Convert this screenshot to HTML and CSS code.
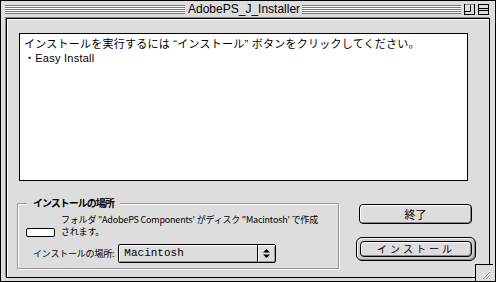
FILE: index.html
```html
<!DOCTYPE html>
<html>
<head lang="ja">
    <meta charset="UTF-8">
    <title>AdobePS_J_Installer</title>
    <link rel="stylesheet" href="styles.css">
</head>
<body>
    <div class="window">
        <div class="titlebar">
            <div class="stripes left"></div>
            <div class="title">AdobePS_J_Installer</div>
            <div class="stripes right"></div>
            <div class="tbtn">
                <svg width="11" height="11" viewBox="0 0 11 11">
                    <rect x="0.5" y="0.5" width="10" height="10" fill="#ddd" stroke="#000"/>
                    <path d="M1 1h9" stroke="#fff"/>
                    <path d="M6.5 1v6.5H1" fill="none" stroke="#000"/>
                </svg>
            </div>
            <div class="tbtn">
                <svg width="11" height="11" viewBox="0 0 11 11">
                    <rect x="0.5" y="0.5" width="10" height="10" fill="#ddd" stroke="#000"/>
                    <path d="M1 4.5h9M1 6.5h9" stroke="#000"/>
                </svg>
            </div>
        </div>
        <div class="frame">
            <div class="content">
                <div class="readme">
                    <p>インストールを実行するには “インストール” ボタンをクリックしてください。</p>
                    <p>・Easy Install</p>
                </div>
                <div class="bottom">
                    <div class="group">
                        <span class="group-title">インストールの場所</span>
                        <div class="folder-row">
                            <span class="folder-box"></span>
                            <p class="folder-text">フォルダ "AdobePS Components' がディスク "Macintosh' で作成<br>されます。</p>
                        </div>
                        <div class="loc-row">
                            <span class="loc-label">インストールの場所:</span>
                            <div class="popup">
                                <span class="popup-value">Macintosh</span>
                                <span class="popup-arrows">
                                    <svg width="7" height="11" viewBox="0 0 7 11">
                                        <path d="M3.5 1L7 4.5H0Z M0 6.5H7L3.5 10Z" fill="#000"/>
                                    </svg>
                                </span>
                            </div>
                        </div>
                    </div>
                    <div class="buttons">
                        <div class="btn quit">終了</div>
                        <div class="default-ring">
                            <div class="btn install">インストール</div>
                        </div>
                    </div>
                </div>
            </div>
        </div>
        <div class="grow">
            <svg width="18" height="17" viewBox="0 0 18 17">
                <path d="M6 14L14 6M9 14L14 9M12 14L14 12" stroke="#fff" stroke-width="1"/>
                <path d="M7 14L14 7M10 14L14 10M13 14L14 13" stroke="#888" stroke-width="1"/>
            </svg>
        </div>
    </div>
</body>
</html>
```

FILE: styles.css
```css
*{
    margin: 0;
    padding: 0;
    box-sizing: border-box;
}
body{
    background: #fff;
    font-family: "Noto Sans CJK JP", sans-serif;
}
.window{
    width: 496px;
    height: 282px;
    border: 1px solid #000;
    background: #ddd;
    display: flex;
    flex-direction: column;
    position: relative;
}
.titlebar{
    height: 17px;
    display: flex;
    align-items: center;
    padding: 0 6px 0 4px;
}
.stripes{
    height: 9px;
    background: repeating-linear-gradient(to bottom, #777 0, #777 1px, #fff 1px, #fff 2px);
}
.stripes.left{
    width: 180px;
}
.stripes.right{
    flex: 1;
}
.title{
    padding: 0 2px 0 3px;
    font-family: "Liberation Sans", sans-serif;
    font-size: 12px;
    line-height: 15px;
    color: #000;
}
.tbtn{
    width: 11px;
    height: 11px;
    margin-left: 3px;
}
.tbtn:first-of-type{
    margin-left: 7px;
}
.tbtn svg{
    display: block;
}
.frame{
    flex: 1;
    margin: 0 5px 3px;
    border: 1px solid #000;
    box-shadow: -1px -1px 0 #888;
}
.content{
    height: 100%;
    padding: 14px 0 0 10px;
    box-shadow: inset 1px 1px 0 #fff;
}
.readme{
    width: 449px;
    height: 148px;
    margin-left: 2px;
    background: #fff;
    border: 1px solid #000;
    padding: 3px 4px;
    font-family: "Liberation Sans", "Noto Sans CJK JP", sans-serif;
    font-size: 11px;
    line-height: 14px;
    letter-spacing: 0.25px;
}
.bottom{
    display: flex;
    gap: 17px;
    margin-top: 22px;
}
.group{
    width: 322px;
    height: 66px;
    border: 1px solid #999;
    box-shadow: 1px 1px 0 #fff, inset 1px 1px 0 #fff;
    padding: 10px 0 0 8px;
    position: relative;
}
.group-title{
    position: absolute;
    left: 9px;
    top: -8px;
    padding: 0 6px;
    background: #ddd;
    font-size: 10px;
    font-weight: bold;
    letter-spacing: -1px;
    line-height: 14px;
}
.folder-row{
    display: flex;
    align-items: flex-end;
    gap: 6px;
    height: 24px;
}
.folder-box{
    width: 29px;
    height: 9px;
    margin-bottom: 1px;
    background: #fff;
    border: 1px solid #000;
    border-radius: 2px;
}
.folder-text{
    font-size: 9px;
    line-height: 12px;
    letter-spacing: -0.2px;
}
.loc-row{
    display: flex;
    align-items: center;
    margin-top: 6px;
    padding-left: 7px;
    gap: 4px;
}
.loc-label{
    font-size: 9px;
    letter-spacing: -0.2px;
}
.popup{
    width: 158px;
    height: 19px;
    display: flex;
    border: 1px solid #000;
    border-radius: 2px;
    box-shadow: inset 1px 1px 0 #fff, inset -1px -1px 0 #999;
}
.popup-value{
    flex: 1;
    padding-left: 5px;
    font-family: "Liberation Mono", monospace;
    font-size: 11px;
    line-height: 17px;
}
.popup-arrows{
    width: 18px;
    border-left: 1px solid #000;
    display: flex;
    align-items: center;
    justify-content: center;
    box-shadow: inset 1px 1px 0 #fff;
}
.popup-arrows svg{
    display: block;
}
.buttons{
    display: flex;
    flex-direction: column;
    padding-top: 1px;
    gap: 13px;
}
.btn{
    background: #ddd;
    border: 1px solid #000;
    border-radius: 4px;
    box-shadow: inset 1px 1px 0 #fff, inset -1px -1px 0 #888;
    text-align: center;
    font-size: 10px;
}
.quit{
    width: 113px;
    height: 20px;
    margin-left: 3px;
    line-height: 18px;
    font-size: 11px;
}
.default-ring{
    width: 120px;
    height: 24px;
    border: 1px solid #000;
    border-radius: 6px;
    padding: 3px;
    background: #ccc;
    box-shadow: inset 1px 1px 0 #fff, inset -1px -1px 0 #888;
}
.install{
    height: 16px;
    line-height: 14px;
    letter-spacing: 3px;
}
.grow{
    position: absolute;
    right: 2px;
    bottom: 0;
    width: 18px;
    height: 17px;
    background: #ddd;
    border-left: 1px solid #000;
    border-top: 1px solid #000;
}
.grow svg{
    display: block;
}
```
